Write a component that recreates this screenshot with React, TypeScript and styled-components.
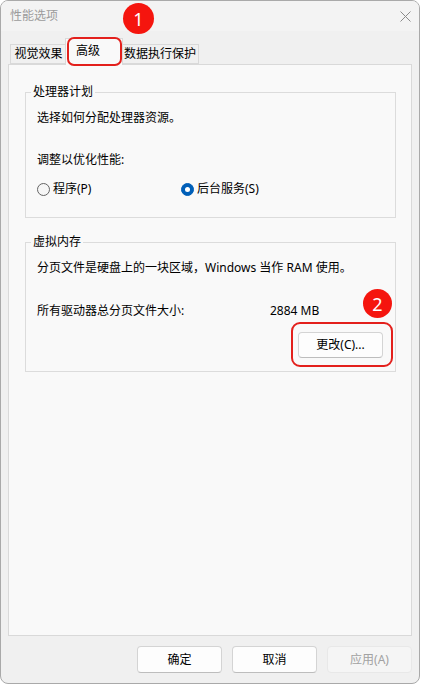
import React from "react"
import styled, { createGlobalStyle } from "styled-components"

const GlobalStyle = createGlobalStyle`
  html, body {
    margin: 0;
    padding: 0;
    background: #ffffff;
  }
  body {
    font-family: "Noto Sans", "Noto Sans CJK SC", sans-serif;
    font-size: 12px;
    line-height: 16px;
    color: #000000;
  }
  * { box-sizing: border-box; }
`

const Window = styled.div`
  position: relative;
  width: 420px;
  height: 684px;
  border: 1px solid #a9a9a9;
  border-radius: 8px;
  background: #f0f0f0;
  display: flex;
  flex-direction: column;
  overflow: hidden;
`

const TitleBar = styled.div`
  height: 30px;
  flex: none;
  display: flex;
  align-items: center;
  justify-content: space-between;
  padding: 0 8px 0 9px;
  background: #f3f3f3;
  color: #9b9b9b;
`

const Body = styled.div`
  flex: 1;
  display: flex;
  flex-direction: column;
  padding: 7px 7px 10px 7px;
`

const TabRow = styled.div`
  height: 26px;
  flex: none;
  display: flex;
  align-items: flex-end;
  padding-left: 2px;
`

const Tab = styled.div<{ $w: number; $active?: boolean }>`
  position: relative;
  width: ${(p) => p.$w + (p.$active ? 4 : 0)}px;
  height: ${(p) => (p.$active ? 27 : 20)}px;
  margin: ${(p) => (p.$active ? "0 -2px -1px -2px" : "0")};
  z-index: ${(p) => (p.$active ? 1 : 0)};
  display: flex;
  align-items: center;
  justify-content: center;
  padding-right: ${(p) => (p.$active ? 12 : 0)}px;
  padding-bottom: ${(p) => (p.$active ? 2 : 0)}px;
  border: 1px solid #d9d9d9;
  border-bottom: ${(p) => (p.$active ? "none" : "1px solid #d9d9d9")};
  background: ${(p) => (p.$active ? "#f9f9f9" : "#f0f0f0")};
  white-space: nowrap;
`

const Panel = styled.div`
  flex: 1;
  border: 1px solid #d9d9d9;
  background: #f9f9f9;
  padding: 0 15px 0 16px;
  display: flex;
  flex-direction: column;
`

const Group = styled.fieldset<{ $top: number }>`
  margin: ${(p) => p.$top}px 0 0 0;
  padding: 0;
  border: 1px solid #dcdcdc;
  min-width: 0;
`

const Legend = styled.legend`
  margin-left: 5px;
  padding: 0 2px;
  line-height: 16px;
`

const GroupBody = styled.div<{ $bottom: number; $right?: number }>`
  padding: 10px ${(p) => p.$right ?? 11}px ${(p) => p.$bottom}px 11px;
  display: flex;
  flex-direction: column;
`

const Line = styled.div<{ $gap?: number }>`
  margin-top: ${(p) => p.$gap ?? 0}px;
  white-space: nowrap;
`

const RadioRow = styled.div`
  margin-top: 13px;
  display: grid;
  grid-template-columns: 144px auto;
`

const RadioItem = styled.label`
  display: flex;
  align-items: center;
  gap: 3px;
  white-space: nowrap;
`

const RadioDot = styled.span<{ $on?: boolean }>`
  width: 13px;
  height: 13px;
  border-radius: 50%;
  flex: none;
  display: flex;
  align-items: center;
  justify-content: center;
  background: ${(p) => (p.$on ? "#005fb8" : "#f6f6f6")};
  border: 1px solid ${(p) => (p.$on ? "#005fb8" : "#646464")};
  &::after {
    content: "";
    display: ${(p) => (p.$on ? "block" : "none")};
    width: 5px;
    height: 5px;
    border-radius: 50%;
    background: #ffffff;
  }
`

const SizeRow = styled.div`
  margin-top: 27px;
  display: grid;
  grid-template-columns: 233px auto;
  white-space: nowrap;
`

const ButtonRow = styled.div`
  margin-top: 13px;
  display: flex;
  justify-content: flex-end;
`

const Button = styled.button<{ $h?: number; $disabled?: boolean }>`
  width: 85px;
  height: ${(p) => p.$h ?? 26}px;
  font: inherit;
  font-size: 12px;
  line-height: 16px;
  padding: 0;
  border-radius: 4px;
  border: 1px solid ${(p) => (p.$disabled ? "#e8e8e8" : "#d4d4d4")};
  border-bottom-color: ${(p) => (p.$disabled ? "#e8e8e8" : "#bdbdbd")};
  background: ${(p) => (p.$disabled ? "#f5f5f5" : "#fdfdfd")};
  color: ${(p) => (p.$disabled ? "#a2a2a2" : "#000000")};
`

const Footer = styled.div`
  margin-top: 10px;
  display: flex;
  justify-content: flex-end;
  gap: 10px;
`

const Marker = styled.div<{ $x: number; $y: number; $d: number }>`
  position: absolute;
  left: ${(p) => p.$x}px;
  top: ${(p) => p.$y}px;
  width: ${(p) => p.$d}px;
  height: ${(p) => p.$d}px;
  border-radius: 50%;
  background: #f5150e;
  color: #ffffff;
  font-family: "Noto Sans", sans-serif;
  font-size: 18px;
  line-height: 18px;
  display: flex;
  align-items: center;
  justify-content: center;
  z-index: 5;
`

const Frame = styled.div<{ $x: number; $y: number; $w: number; $h: number; $r: number }>`
  position: absolute;
  left: ${(p) => p.$x}px;
  top: ${(p) => p.$y}px;
  width: ${(p) => p.$w}px;
  height: ${(p) => p.$h}px;
  border: 2px solid #e3201c;
  border-radius: ${(p) => p.$r}px;
  z-index: 5;
`

function CloseIcon() {
  return (
    <svg width="11" height="11" viewBox="0 0 11 11">
      <path d="M0.5 0.5 L10.5 10.5 M10.5 0.5 L0.5 10.5" stroke="#8a8a8a" strokeWidth="1" fill="none" />
    </svg>
  )
}

export default function App() {
  return (
    <>
      <GlobalStyle />
      <Window>
        <TitleBar>
          <span>性能选项</span>
          <CloseIcon />
        </TitleBar>

        <Body>
          <TabRow>
            <Tab $w={57}>视觉效果</Tab>
            <Tab $w={54} $active>高级</Tab>
            <Tab $w={78}>数据执行保护</Tab>
          </TabRow>

          <Panel>
            <Group $top={19}>
              <Legend>处理器计划</Legend>
              <GroupBody $bottom={20}>
                <Line>选择如何分配处理器资源。</Line>
                <Line $gap={26}>调整以优化性能:</Line>
                <RadioRow>
                  <RadioItem>
                    <RadioDot />
                    程序(P)
                  </RadioItem>
                  <RadioItem>
                    <RadioDot $on />
                    后台服务(S)
                  </RadioItem>
                </RadioRow>
              </GroupBody>
            </Group>

            <Group $top={16}>
              <Legend>虚拟内存</Legend>
              <GroupBody $bottom={13} $right={12}>
                <Line>分页文件是硬盘上的一块区域，Windows 当作 RAM 使用。</Line>
                <SizeRow>
                  <span>所有驱动器总分页文件大小:</span>
                  <span>2884 MB</span>
                </SizeRow>
                <ButtonRow>
                  <Button>更改(C)...</Button>
                </ButtonRow>
              </GroupBody>
            </Group>
          </Panel>

          <Footer>
            <Button $h={27}>确定</Button>
            <Button $h={27}>取消</Button>
            <Button $h={27} $disabled>应用(A)</Button>
          </Footer>
        </Body>

        <Marker $x={122} $y={2} $d={31}>1</Marker>
        <Frame $x={66} $y={36} $w={55} $h={29} $r={7} />
        <Marker $x={362} $y={288} $d={29}>2</Marker>
        <Frame $x={290} $y={321} $w={102} $h={45} $r={9} />
      </Window>
    </>
  )
}
